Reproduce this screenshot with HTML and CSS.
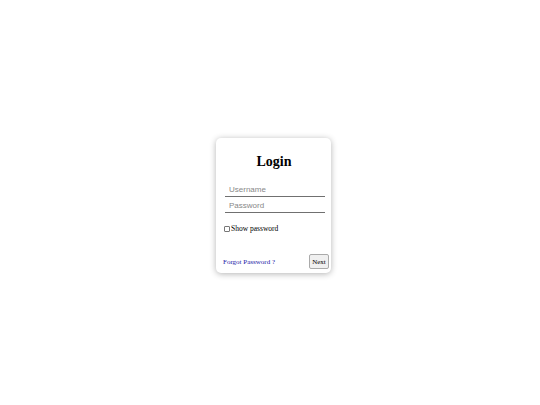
FILE: index.html
```html
<!DOCTYPE html>
<html>
<head>
<meta charset="utf-8">
<link rel="stylesheet" href="styles.css">
</head>
<body>
<div class="page">
  <div class="card">
    <h1 class="title">Login</h1>
    <input class="field" type="text" placeholder="Username">
    <input class="field" type="password" placeholder="Password">
    <label class="show"><input type="checkbox" class="check">Show password</label>
    <div class="footer">
      <a class="forgot" href="#">Forgot Password ?</a>
      <button class="next">Next</button>
    </div>
  </div>
</div>
</body>
</html>
```
FILE: styles.css
```css
html, body { margin: 0; padding: 0; background: #fff; }
.page {
  height: 405px;
  box-sizing: border-box;
  display: flex;
  align-items: center;
  justify-content: center;
  padding-left: 7px;
  padding-top: 6px;
  font-family: "Liberation Serif", serif;
}
.card {
  width: 115px;
  height: 135px;
  box-sizing: border-box;
  border-radius: 5px;
  box-shadow: 0 1px 6px rgba(0,0,0,0.3);
  padding: 15px 2px 0 7px;
  display: flex;
  flex-direction: column;
}
.title {
  margin: 0 0 12px;
  text-align: center;
  font-size: 14px;
  line-height: 17px;
  font-weight: bold;
  padding-right: 4px;
}
.field {
  margin: 0 0 0 2px;
  width: 100px;
  box-sizing: border-box;
  border: none;
  border-bottom: 1px solid #707070;
  font-family: "Liberation Sans", sans-serif;
  font-size: 8px;
  padding: 2px 4px;
  height: 15px;
  outline: none;
}
.field + .field { margin-top: 1px; }
.field::placeholder { color: #888; }
.show {
  margin-top: 11px;
  display: flex;
  align-items: center;
  font-size: 7.5px;
}
.check {
  appearance: none;
  -webkit-appearance: none;
  margin: 0 1px 0 1px;
  width: 6px;
  height: 6px;
  border: 1px solid #777;
  border-radius: 1px;
  box-sizing: border-box;
  background: #fff;
}
.footer {
  margin-top: auto;
  margin-bottom: 4px;
  display: flex;
  justify-content: space-between;
  align-items: center;
}
.forgot {
  color: #1a1aa6;
  text-decoration: none;
  font-size: 7px;
}
.next {
  font-family: "Liberation Serif", serif;
  font-size: 7px;
  padding: 0;
  height: 15px;
  width: 20px;
  background: #f0f0f0;
  border: 1px solid #aaa;
  border-radius: 2px;
}
```
